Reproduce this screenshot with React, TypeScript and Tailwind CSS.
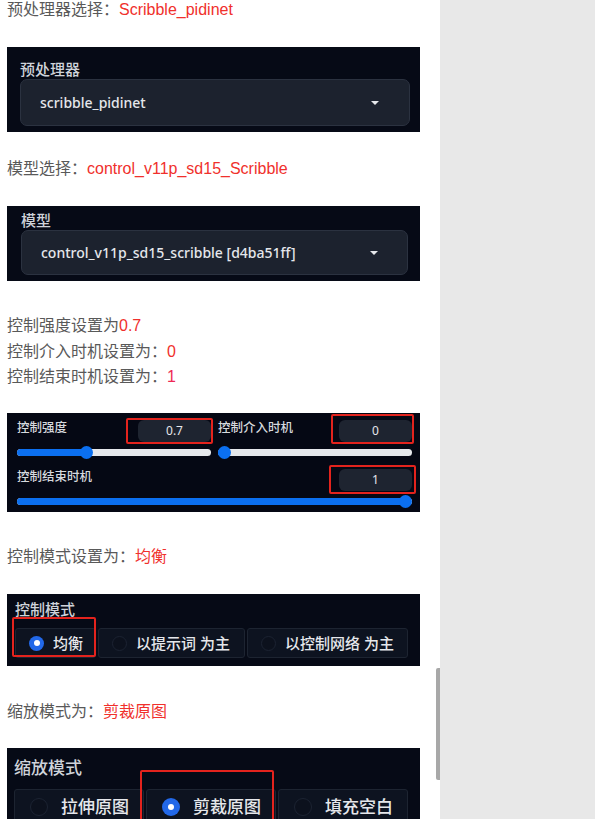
const Caret = () => (
  <svg width="10" height="6" viewBox="0 0 10 6" className="shrink-0">
    <path d="M1 1 L9 1 L5 5 Z" fill="#e5e7eb" />
  </svg>
);

const Note = ({ label, value }: { label: string; value: string }) => (
  <p className="leading-[20px] text-[16px] text-[#595959]">
    {label}
    <span className="text-[#f0302c]">{value}</span>
  </p>
);

const Slider = ({ pct }: { pct: number }) => (
  <div className="relative flex h-[13px] items-center">
    <div className="h-[7px] w-full rounded-full bg-[#e6e8ec]" />
    <div
      className="absolute left-0 h-[7px] rounded-full bg-[#0b6ff0]"
      style={{ width: `calc(${pct} * (100% - 13px) + 6.5px)` }}
    />
    <div
      className="absolute top-0 h-[13px] w-[13px] rounded-full bg-[#0b6ff0]"
      style={{ left: `calc(${pct} * (100% - 13px))` }}
    />
  </div>
);

const NumBox = ({ v }: { v: string }) => (
  <div className="mt-[1px] flex h-[22px] w-[73px] items-center justify-center rounded-[6px] bg-[#1e2430] text-[12px] text-[#e5e7eb]">
    {v}
  </div>
);

const Radio = ({ on, size }: { on: boolean; size: string }) =>
  on ? (
    <span className={`flex shrink-0 items-center justify-center rounded-full bg-[#2268e8] ${size}`}>
      <span className="h-[6px] w-[6px] rounded-full bg-white" />
    </span>
  ) : (
    <span className={`shrink-0 rounded-full border border-[#1c2332] bg-[#0c111d] ${size}`} />
  );

const RedBox = ({ className }: { className: string }) => (
  <div className={`absolute rounded-[2px] border-2 border-[#e3231d] ${className}`} />
);

export default function App() {
  return (
    <div className="flex h-[819px] w-[595px] overflow-hidden bg-white font-['Liberation_Sans','Noto_Sans_CJK_SC',sans-serif]">
      <div className="relative w-[440px] shrink-0 overflow-hidden pl-[7px]">
        <Note label="预处理器选择：" value="Scribble_pidinet" />

        <div className="mt-[27px] h-[85px] w-[413px] bg-[#060a16] pt-[12px] font-['Noto_Sans','Noto_Sans_CJK_SC',sans-serif]">
          <div className="ml-[13px] text-[15px] font-medium leading-[20px] text-[#cfd3da]">预处理器</div>
          <div className="ml-[13px] flex h-[47px] w-[390px] items-center justify-between rounded-[7px] border border-[#2b3240] bg-[#1c222e] pl-[19px] pr-[29px]">
            <span className="text-[14px] font-medium text-[#e5e7eb]">scribble_pidinet</span>
            <Caret />
          </div>
        </div>

        <div className="mt-[27px]">
          <Note label="模型选择：" value="control_v11p_sd15_Scribble" />
        </div>

        <div className="mt-[27px] h-[75px] w-[413px] bg-[#060a16] pt-[4px] font-['Noto_Sans','Noto_Sans_CJK_SC',sans-serif]">
          <div className="ml-[14px] text-[15px] font-medium leading-[20px] text-[#cfd3da]">模型</div>
          <div className="ml-[14px] flex h-[45px] w-[387px] items-center justify-between rounded-[7px] border border-[#2b3240] bg-[#1c222e] pl-[19px] pr-[28px]">
            <span className="text-[14px] font-medium text-[#e5e7eb]">control_v11p_sd15_scribble [d4ba51ff]</span>
            <Caret />
          </div>
        </div>

        <div className="mt-[32px] text-[16px] leading-[25.5px] text-[#595959]">
          <p>
            控制强度设置为<span className="text-[#f0302c]">0.7</span>
          </p>
          <p>
            控制介入时机设置为：<span className="text-[#f0302c]">0</span>
          </p>
          <p>
            控制结束时机设置为：<span className="text-[#ee2a55]">1</span>
          </p>
        </div>

        <div className="relative mt-[23.5px] h-[99px] w-[413px] bg-[#050814] pl-[10px] pr-[8px] pt-[6px] font-['Noto_Sans','Noto_Sans_CJK_SC',sans-serif]">
          <div className="grid grid-cols-2 gap-x-[7px]">
            <div>
              <div className="flex h-[24px] items-start justify-between">
                <span className="text-[12.5px] font-medium leading-[18px] text-[#d6d9de]">控制强度</span>
                <NumBox v="0.7" />
              </div>
              <div className="mt-[3px]">
                <Slider pct={0.35} />
              </div>
            </div>
            <div>
              <div className="flex h-[24px] items-start justify-between">
                <span className="text-[12.5px] font-medium leading-[18px] text-[#d6d9de]">控制介入时机</span>
                <NumBox v="0" />
              </div>
              <div className="mt-[3px]">
                <Slider pct={0} />
              </div>
            </div>
          </div>
          <div className="mt-[9px] flex h-[24px] items-start justify-between">
            <span className="text-[12.5px] font-medium leading-[18px] text-[#d6d9de]">控制结束时机</span>
            <NumBox v="1" />
          </div>
          <div className="mt-[3px]">
            <Slider pct={1} />
          </div>
          <RedBox className="left-[119px] top-[5px] h-[26px] w-[87px]" />
          <RedBox className="left-[324px] top-[1px] h-[30px] w-[83px]" />
          <RedBox className="left-[322px] top-[52px] h-[29px] w-[87px]" />
        </div>

        <div className="mt-[35px]">
          <Note label="控制模式设置为：" value="均衡" />
        </div>

        <div className="relative mt-[27px] h-[72px] w-[413px] bg-[#060a16] pt-[5px] font-['Noto_Sans','Noto_Sans_CJK_SC',sans-serif]">
          <div className="ml-[8px] text-[15px] font-medium leading-[20px] text-[#cfd3da]">控制模式</div>
          <div className="ml-[8px] mt-[9px] flex gap-[2px]">
            {[
              { t: "均衡", w: "w-[81px]", on: true },
              { t: "以提示词 为主", w: "w-[147px]", on: false },
              { t: "以控制网络 为主", w: "w-[161px]", on: false },
            ].map((b) => (
              <div
                key={b.t}
                className={`flex h-[30px] items-center gap-[9px] rounded-[3px] border border-[#1d2431] bg-[#0d1320] pl-[13px] ${b.w}`}
              >
                <Radio on={b.on} size="h-[15px] w-[15px]" />
                <span className="whitespace-pre text-[15px] font-medium text-[#e5e7eb]">{b.t}</span>
              </div>
            ))}
          </div>
          <RedBox className="left-[5px] top-[23px] h-[40px] w-[84px]" />
        </div>

        <div className="mt-[36px]">
          <Note label="缩放模式为：" value="剪裁原图" />
        </div>

        <div className="relative mt-[26px] h-[90px] w-[413px] bg-[#060a16] pt-[8px] font-['Noto_Sans','Noto_Sans_CJK_SC',sans-serif]">
          <div className="ml-[7px] text-[17px] font-medium leading-[24px] text-[#cfd3da]">缩放模式</div>
          <div className="mt-[9px] grid grid-cols-3 gap-[2px] pl-[7px] pr-[12px]">
            {[
              { t: "拉伸原图", on: false },
              { t: "剪裁原图", on: true },
              { t: "填充空白", on: false },
            ].map((b) => (
              <div
                key={b.t}
                className="flex h-[36px] items-center gap-[13px] rounded-[3px] border border-[#1d2431] bg-[#0d1320] pl-[15px]"
              >
                <Radio on={b.on} size="h-[18px] w-[18px]" />
                <span className="text-[17px] font-medium text-[#e5e7eb]">{b.t}</span>
              </div>
            ))}
          </div>
          <RedBox className="left-[133px] top-[22px] h-[60px] w-[134px]" />
        </div>

        <div className="absolute right-0 top-[668px] h-[112px] w-[4px] rounded-l-[2px] bg-[#a8a8a8]" />
      </div>
      <div className="flex-1 bg-[#e8e8e8]" />
    </div>
  );
}
